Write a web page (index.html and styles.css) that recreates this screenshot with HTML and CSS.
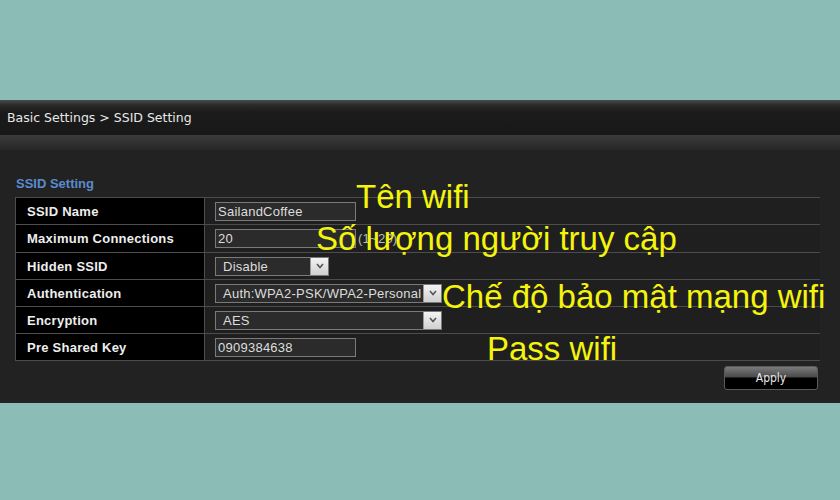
FILE: index.html
```html
<!DOCTYPE html>
<html>
<head>
<meta charset="utf-8">
<link rel="stylesheet" href="styles.css">
</head>
<body>
<div class="page">
  <div class="panel">
    <div class="crumb">Basic Settings &gt; SSID Setting</div>
    <div class="band"></div>
    <div class="section">
      <div class="title">SSID Setting</div>
      <table class="grid">
        <tr><td class="lbl">SSID Name</td><td class="val"><span class="inp">SailandCoffee</span></td></tr>
        <tr class="tall"><td class="lbl">Maximum Connections</td><td class="val"><span class="inp">20</span><span class="hint">(1~20)</span></td></tr>
        <tr><td class="lbl">Hidden SSID</td><td class="val"><span class="sel sel-s"><span class="st">Disable</span><span class="arr"><svg width="10" height="8" viewBox="0 0 10 8"><polyline points="2,2 5,5.5 8,2" fill="none" stroke="#555" stroke-width="1.6"/></svg></span></span></td></tr>
        <tr><td class="lbl">Authentication</td><td class="val"><span class="sel sel-l"><span class="st">Auth:WPA2-PSK/WPA2-Personal</span><span class="arr"><svg width="10" height="8" viewBox="0 0 10 8"><polyline points="2,2 5,5.5 8,2" fill="none" stroke="#555" stroke-width="1.6"/></svg></span></span></td></tr>
        <tr><td class="lbl">Encryption</td><td class="val"><span class="sel sel-l"><span class="st">AES</span><span class="arr"><svg width="10" height="8" viewBox="0 0 10 8"><polyline points="2,2 5,5.5 8,2" fill="none" stroke="#555" stroke-width="1.6"/></svg></span></span></td></tr>
        <tr><td class="lbl">Pre Shared Key</td><td class="val"><span class="inp">0909384638</span></td></tr>
      </table>
      <div class="actions"><span class="btn">Apply</span></div>
    </div>
  </div>
  <div class="note n1">Tên wifi</div>
  <div class="note n2">Số lượng người truy cập</div>
  <div class="note n3">Chế độ bảo mật mạng wifi</div>
  <div class="note n4">Pass wifi</div>
</div>
</body>
</html>
```
FILE: styles.css
```css
html, body {
  margin: 0;
  padding: 0;
  background: #8bbdb6;
}
.page {
  position: relative;
  width: 840px;
  height: 500px;
  overflow: hidden;
  padding-top: 100px;
  box-sizing: border-box;
}
.panel {
  height: 303px;
  background: #222222;
  display: flex;
  flex-direction: column;
}
.crumb {
  height: 35px;
  box-sizing: border-box;
  padding: 10px 0 0 7px;
  background: linear-gradient(#4a4a4a 0px, #2a2a2a 5px, #1b1b1b 12px, #181818 35px);
  color: #e8e8e8;
  font-family: "DejaVu Sans", sans-serif;
  font-size: 12.5px;
  line-height: 16px;
}
.band {
  height: 15px;
  background: linear-gradient(#3c3c3c, #262626);
}
.section {
  padding: 26px 22px 0 15px;
}
.title {
  color: #5a8bd0;
  font-family: "Liberation Sans", Arial, sans-serif;
  font-weight: bold;
  font-size: 13px;
  line-height: 15px;
  margin-bottom: 6px;
  padding-left: 1px;
}
.grid {
  width: 805px;
  border-collapse: collapse;
  font-family: "Liberation Sans", Arial, sans-serif;
  font-size: 13px;
}
.grid td {
  height: 26px;
  padding: 0;
  border: 1px solid #4c4c4c;
  border-left: none;
  border-right: none;
}
.grid tr.tall td {
  height: 27px;
}
.grid td.lbl {
  width: 177px;
  padding-left: 11px;
  background: #000000;
  color: #eeeeee;
  font-weight: bold;
  letter-spacing: 0.25px;
  border-left: 1px solid #4c4c4c;
  border-right: 1px solid #4c4c4c;
}
.grid td.val {
  background: #1f1f1f;
  padding-left: 10px;
}
.val {
  color: #dddddd;
  letter-spacing: 0.25px;
}
.inp {
  display: inline-block;
  vertical-align: middle;
  width: 141px;
  height: 19px;
  box-sizing: border-box;
  border: 1px solid #7a7a7a;
  background: #2b2b2b;
  padding-left: 2px;
  line-height: 17px;
  color: #dddddd;
}
.hint {
  vertical-align: middle;
  margin-left: 2px;
  color: #bbbbbb;
}
.sel {
  display: inline-flex;
  vertical-align: middle;
  height: 19px;
  box-sizing: border-box;
  border: 1px solid #7a7a7a;
  background: #2b2b2b;
  align-items: stretch;
}
.sel-s { width: 114px; }
.sel-l { width: 227px; }
.st {
  flex: 1;
  padding-left: 7px;
  line-height: 17px;
  color: #dddddd;
  white-space: nowrap;
  overflow: hidden;
}
.arr {
  flex: 0 0 17px;
  background: linear-gradient(#f4f4f4, #d0d0d0);
  border-left: 1px solid #999;
  display: flex;
  align-items: center;
  justify-content: center;
}
.actions {
  display: flex;
  justify-content: flex-end;
  padding-top: 5px;
}
.btn {
  width: 94px;
  height: 24px;
  box-sizing: border-box;
  border: 1px solid #5a5a5a;
  border-radius: 3px;
  background: linear-gradient(#7a7a7a 0%, #4a4a4a 45%, #000 50%, #000 100%);
  color: #e8e8e8;
  font-family: "DejaVu Sans Condensed", "DejaVu Sans", sans-serif;
  font-size: 12px;
  line-height: 22px;
  text-align: center;
}
.note {
  position: absolute;
  color: #f4f40c;
  font-family: "Liberation Sans", Arial, sans-serif;
  font-size: 33px;
  line-height: 33px;
  white-space: nowrap;
}
.n1 { left: 356px; top: 180px; }
.n2 { left: 316px; top: 222px; }
.n3 { left: 442px; top: 280px; }
.n4 { left: 487px; top: 332px; }
```
